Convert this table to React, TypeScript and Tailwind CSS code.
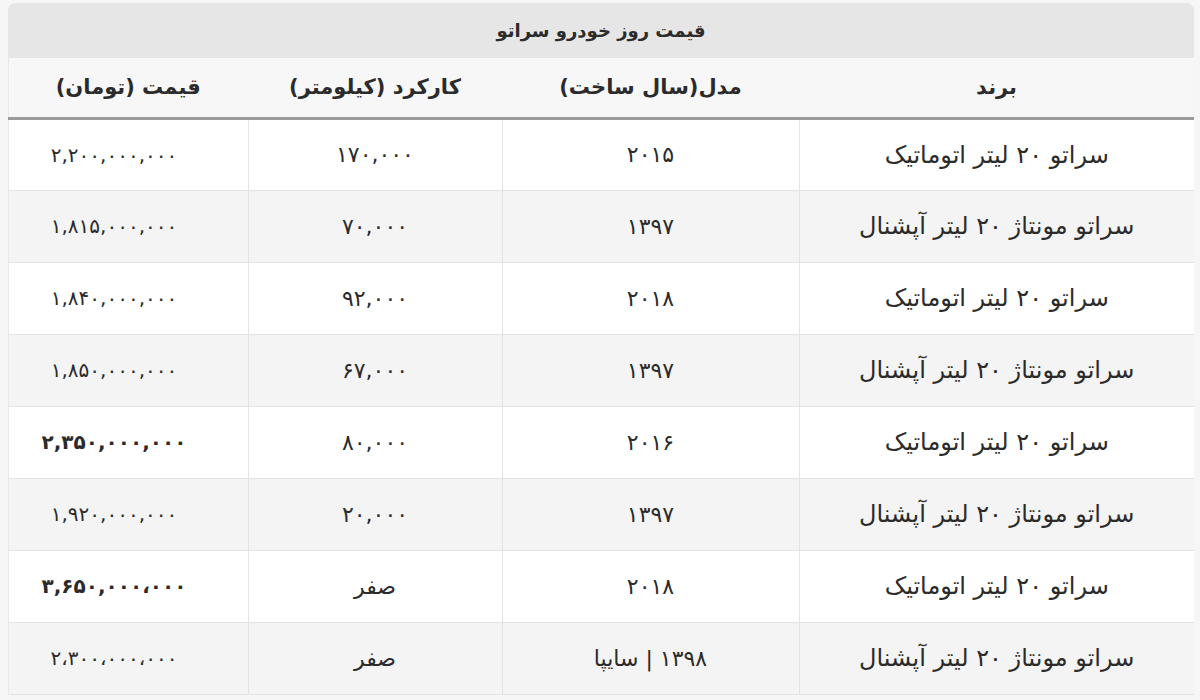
import React from 'react';

// Saratu daily price table
interface CarRow {
  brand: string;
  model: string;
  km: string;
  price: string;
  bold?: boolean;
}

const ROWS: CarRow[] = [
  { brand: 'سراتو ۲۰ لیتر اتوماتیک', model: '۲۰۱۵', km: '۱۷۰,۰۰۰', price: '۲,۲۰۰,۰۰۰,۰۰۰' },
  { brand: 'سراتو مونتاژ ۲۰ لیتر آپشنال', model: '۱۳۹۷', km: '۷۰,۰۰۰', price: '۱,۸۱۵,۰۰۰,۰۰۰' },
  { brand: 'سراتو ۲۰ لیتر اتوماتیک', model: '۲۰۱۸', km: '۹۲,۰۰۰', price: '۱,۸۴۰,۰۰۰,۰۰۰' },
  { brand: 'سراتو مونتاژ ۲۰ لیتر آپشنال', model: '۱۳۹۷', km: '۶۷,۰۰۰', price: '۱,۸۵۰,۰۰۰,۰۰۰' },
  { brand: 'سراتو ۲۰ لیتر اتوماتیک', model: '۲۰۱۶', km: '۸۰,۰۰۰', price: '۲,۳۵۰,۰۰۰,۰۰۰', bold: true },
  { brand: 'سراتو مونتاژ ۲۰ لیتر آپشنال', model: '۱۳۹۷', km: '۲۰,۰۰۰', price: '۱,۹۲۰,۰۰۰,۰۰۰' },
  { brand: 'سراتو ۲۰ لیتر اتوماتیک', model: '۲۰۱۸', km: 'صفر', price: '۳,۶۵۰,۰۰۰،۰۰۰', bold: true },
  { brand: 'سراتو مونتاژ ۲۰ لیتر آپشنال', model: '۱۳۹۸ | سایپا', km: 'صفر', price: '۲،۳۰۰،۰۰۰،۰۰۰' },
];

const HEADERS = ['برند', 'مدل(سال ساخت)', 'کارکرد (کیلومتر)', 'قیمت (تومان)'];

export default function App() {
  return (
    <div
      dir="rtl"
      className="w-[1200px] h-[700px] overflow-hidden bg-[#f6f6f6] pt-[3px] pl-[8px] pr-[6px] text-[#2b2b2b]"
      style={{ fontFamily: '"DejaVu Sans", "Noto Sans", sans-serif' }}
    >
      {/* Title bar */}
      <div className="h-[55px] rounded-t-[8px] bg-[#e6e6e6] flex items-center justify-center text-[18px] font-bold">
        قیمت روز خودرو سراتو
      </div>

      <table className="w-[1186px] table-fixed border-collapse bg-white border-l border-[#e8e8e8]">
        <colgroup>
          <col className="w-[395px]" />
          <col className="w-[297px]" />
          <col className="w-[254px]" />
          <col className="w-[240px]" />
        </colgroup>
        <thead>
          <tr className="h-[60px] bg-[#f7f7f7] border-b-[3px] border-[#9a9a9a]">
            {HEADERS.map((h) => (
              <th key={h} className="text-center text-[21px] font-bold pt-[1px]">
                {h}
              </th>
            ))}
          </tr>
        </thead>
        <tbody>
          {ROWS.map((row, i) => (
            <tr
              key={i}
              className={`h-[72px] border-b border-[#e3e3e3] ${i % 2 === 1 ? 'bg-[#f4f4f4]' : 'bg-white'}`}
            >
              <td className="text-center text-[24px] border-l border-[#e3e3e3]">{row.brand}</td>
              <td className="text-center text-[22px] border-l border-[#e3e3e3]">{row.model}</td>
              <td className="text-center text-[22px] border-l border-[#e3e3e3]">{row.km}</td>
              <td className={`text-center text-[20px] pr-[28px] ${row.bold ? 'font-bold' : ''}`}>{row.price}</td>
            </tr>
          ))}
        </tbody>
      </table>
    </div>
  );
}
